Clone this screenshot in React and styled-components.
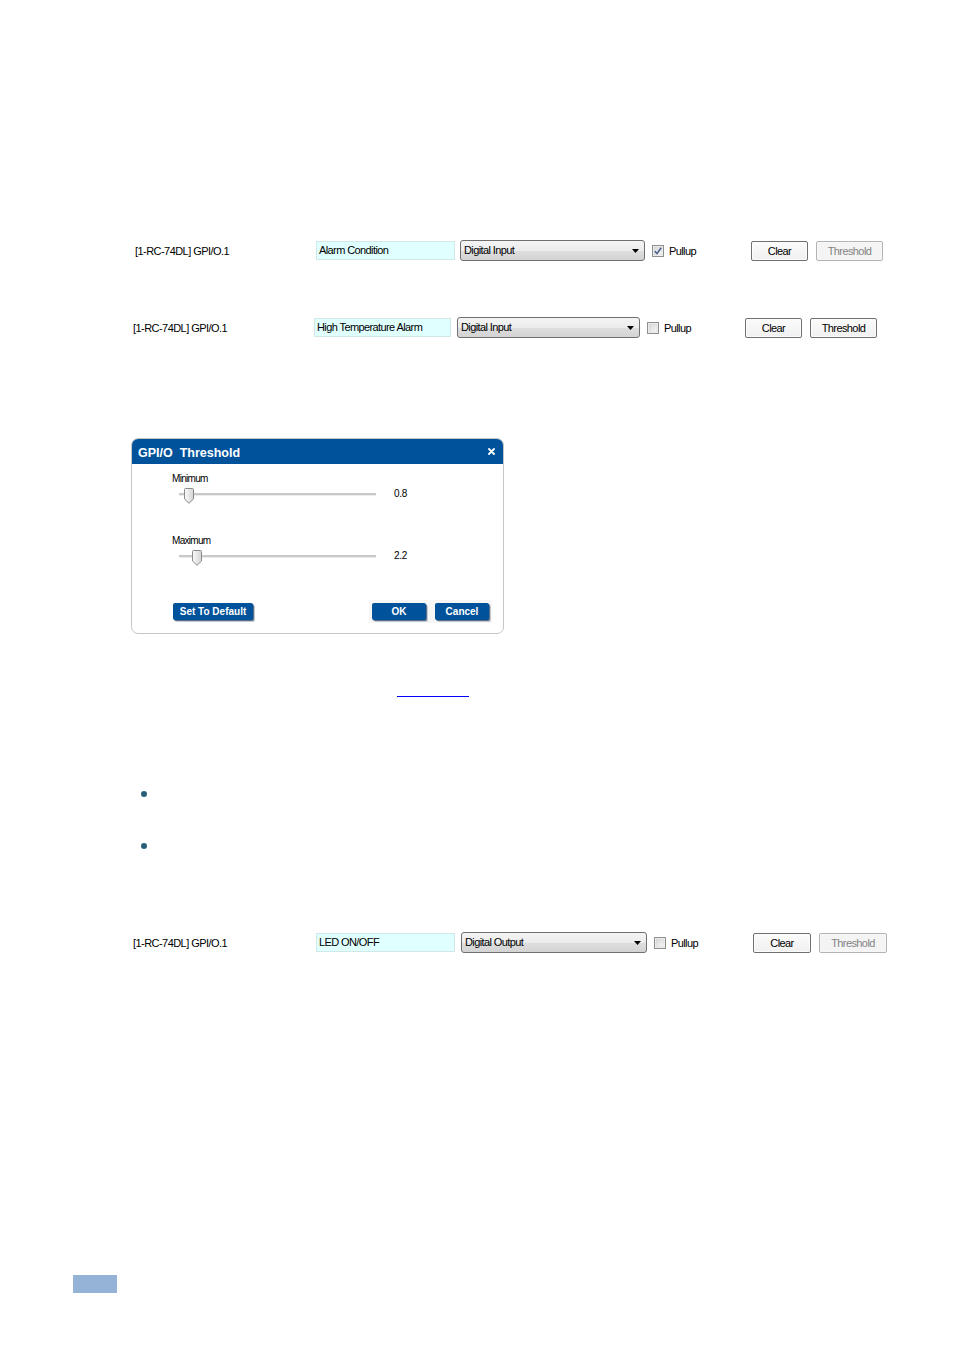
import React from "react";
import styled, { createGlobalStyle } from "styled-components";

const GlobalStyle = createGlobalStyle`
  html, body {
    margin: 0;
    padding: 0;
    background: #fff;
  }
  body {
    font-family: "Liberation Sans", Arial, sans-serif;
    color: #000;
  }
`;

const ports = [
  {
    mt: 240, left: 135, labelW: 181, textW: 139, selGap: 5, selW: 185,
    chkW: 99, clearW: 57, thrW: 67,
    name: "Alarm Condition", mode: "Digital Input", pullup: true, thresholdOn: false,
  },
  {
    mt: 56, left: 133, labelW: 181, textW: 137, selGap: 6, selW: 183,
    chkW: 98, clearW: 57, thrW: 67,
    name: "High Temperature Alarm", mode: "Digital Input", pullup: false, thresholdOn: true,
  },
];

const outputPort = {
  mt: 83, left: 133, labelW: 183, textW: 139, selGap: 6, selW: 186,
  chkW: 99, clearW: 58, thrW: 68,
  name: "LED ON/OFF", mode: "Digital Output", pullup: false, thresholdOn: false,
};

function Arrow() {
  return (
    <svg width="7" height="4" viewBox="0 0 7 4">
      <path d="M0 0 H7 L3.5 4 Z" fill="#000" />
    </svg>
  );
}

function CheckBox({ checked }) {
  return (
    <svg width="12" height="12" viewBox="0 0 12 12">
      <defs>
        <linearGradient id="cbg" x1="0" y1="0" x2="1" y2="1">
          <stop offset="0" stopColor="#d6d6d6" />
          <stop offset="1" stopColor="#f8f8f8" />
        </linearGradient>
      </defs>
      <rect x="0.5" y="0.5" width="11" height="11" fill="#f4f4f4" stroke="#8e8f8f" />
      <rect x="2" y="2" width="8" height="8" fill="url(#cbg)" stroke="#cfcfcf" strokeWidth="0.5" />
      {checked && (
        <path d="M2.8 6.2 L5 8.6 L9.2 2.8" fill="none" stroke="#4b5f8e" strokeWidth="1.6" />
      )}
    </svg>
  );
}

function CloseIcon() {
  return (
    <svg width="7" height="7" viewBox="0 0 7 7">
      <path d="M1 1 L6 6 M6 1 L1 6" stroke="#fff" strokeWidth="1.8" strokeLinecap="round" />
    </svg>
  );
}

function ThumbShape() {
  return (
    <svg width="10" height="16" viewBox="0 0 10 16">
      <defs>
        <linearGradient id="thg" x1="0" y1="0" x2="1" y2="0">
          <stop offset="0" stopColor="#fafafa" />
          <stop offset="1" stopColor="#d4d4d4" />
        </linearGradient>
      </defs>
      <path
        d="M1.5 0.5 H8.5 Q9.5 0.5 9.5 1.5 V11 L5 15.3 L0.5 11 V1.5 Q0.5 0.5 1.5 0.5 Z"
        fill="url(#thg)"
        stroke="#8a8a8a"
      />
    </svg>
  );
}

function PortRow({ p }) {
  return (
    <Row $mt={p.mt} $left={p.left}>
      <PortLabel $w={p.labelW}>[1-RC-74DL] GPI/O.1</PortLabel>
      <NameBox $w={p.textW}>{p.name}</NameBox>
      <Combo $gap={p.selGap} $w={p.selW}>
        <span>{p.mode}</span>
        <Arrow />
      </Combo>
      <CheckGroup $w={p.chkW}>
        <CheckBox checked={p.pullup} />
        <span>Pullup</span>
      </CheckGroup>
      <WinButton $w={p.clearW}>Clear</WinButton>
      <WinButton $w={p.thrW} $disabled={!p.thresholdOn} $gap={8}>
        Threshold
      </WinButton>
    </Row>
  );
}

function ThresholdSlider({ label, value, pos, mt }) {
  return (
    <SliderBlock $mt={mt}>
      <FieldLabel>{label}</FieldLabel>
      <SliderRow>
        <Track>
          <Thumb style={{ left: pos }}>
            <ThumbShape />
          </Thumb>
        </Track>
        <Value>{value}</Value>
      </SliderRow>
    </SliderBlock>
  );
}

export default function App() {
  return (
    <>
      <GlobalStyle />
      <Page>
        {ports.map((p, i) => (
          <PortRow key={i} p={p} />
        ))}

        <Dialog>
          <DialogHeader>
            <DialogTitle>GPI/O  Threshold</DialogTitle>
            <CloseIcon />
          </DialogHeader>
          <DialogBody>
            <ThresholdSlider label="Minimum" value="0.8" pos={5} mt={0} />
            <ThresholdSlider label="Maximum" value="2.2" pos={13} mt={32} />
            <ButtonBar>
              <BlueButton $w={80}>Set To Default</BlueButton>
              <ButtonGroup>
                <BlueButton $w={54}>OK</BlueButton>
                <BlueButton $w={54}>Cancel</BlueButton>
              </ButtonGroup>
            </ButtonBar>
          </DialogBody>
        </Dialog>

        <LinkLine />
        <Bullet $mt={94} />
        <Bullet $mt={46} />

        <PortRow p={outputPort} />

        <FooterTab />
      </Page>
    </>
  );
}

const Page = styled.div`
  width: 954px;
  min-height: 1350px;
  display: flex;
  flex-direction: column;
  align-items: flex-start;
`;

const Row = styled.div`
  display: flex;
  align-items: center;
  height: 21px;
  margin-top: ${(p) => p.$mt}px;
  padding-left: ${(p) => p.$left}px;
  font-size: 11px;
  letter-spacing: -0.6px;
`;

const PortLabel = styled.div`
  width: ${(p) => p.$w}px;
  flex-shrink: 0;
  letter-spacing: -0.55px;
`;

const NameBox = styled.div`
  width: ${(p) => p.$w}px;
  height: 19px;
  box-sizing: border-box;
  flex-shrink: 0;
  background: #e0ffff;
  border: 1px solid #d2e8e8;
  padding-left: 2px;
  line-height: 16px;
  white-space: nowrap;
  overflow: hidden;
`;

const Combo = styled.div`
  width: ${(p) => p.$w}px;
  margin-left: ${(p) => p.$gap}px;
  height: 21px;
  box-sizing: border-box;
  flex-shrink: 0;
  border: 1px solid #707070;
  border-radius: 3px;
  background: linear-gradient(#f4f4f4 0%, #ececec 50%, #dedede 52%, #d3d3d3 100%);
  display: flex;
  align-items: center;
  justify-content: space-between;
  padding: 0 5px 0 3px;
  line-height: 19px;
`;

const CheckGroup = styled.div`
  width: ${(p) => p.$w}px;
  margin-left: 7px;
  flex-shrink: 0;
  display: flex;
  align-items: center;
  gap: 5px;
  svg {
    display: block;
  }
`;

const WinButton = styled.div`
  width: ${(p) => p.$w}px;
  margin-left: ${(p) => p.$gap || 0}px;
  height: 20px;
  box-sizing: border-box;
  flex-shrink: 0;
  border: 1px solid ${(p) => (p.$disabled ? "#b0b4b7" : "#707070")};
  border-radius: 2px;
  box-shadow: inset 0 0 0 1px ${(p) => (p.$disabled ? "#f7f7f7" : "#fcfcfc")};
  background: ${(p) => (p.$disabled ? "#f4f4f4" : "linear-gradient(#fbfbfb, #f0f0f0)")};
  color: ${(p) => (p.$disabled ? "#838383" : "#000")};
  display: flex;
  align-items: center;
  justify-content: center;
`;

const Dialog = styled.div`
  margin-top: 100px;
  margin-left: 131px;
  width: 373px;
  height: 196px;
  box-sizing: border-box;
  border: 1px solid #c6c6c6;
  border-radius: 7px;
  overflow: hidden;
  background: #fff;
  display: flex;
  flex-direction: column;
`;

const DialogHeader = styled.div`
  height: 25px;
  flex-shrink: 0;
  background: #00529b;
  display: flex;
  align-items: center;
  justify-content: space-between;
  padding: 0 8px 0 6px;
  svg {
    display: block;
  }
`;

const DialogTitle = styled.div`
  color: #fff;
  font-weight: bold;
  font-size: 12.5px;
  white-space: pre;
  padding-top: 2px;
`;

const DialogBody = styled.div`
  display: flex;
  flex-direction: column;
  padding: 9px 0 0 40px;
`;

const SliderBlock = styled.div`
  margin-top: ${(p) => p.$mt}px;
  display: flex;
  flex-direction: column;
`;

const FieldLabel = styled.div`
  font-size: 10px;
  line-height: 12px;
  height: 12px;
  letter-spacing: -0.7px;
`;

const SliderRow = styled.div`
  margin-top: 2px;
  height: 16px;
  display: flex;
  align-items: flex-start;
  padding-left: 7px;
`;

const Track = styled.div`
  position: relative;
  width: 197px;
  height: 2px;
  margin-top: 6px;
  background: #c9c9c9;
  border-bottom: 1px solid #ececec;
`;

const Thumb = styled.div`
  position: absolute;
  top: -5px;
  svg {
    display: block;
  }
`;

const Value = styled.div`
  margin-left: 18px;
  margin-top: 1px;
  font-size: 10px;
  line-height: 12px;
  letter-spacing: -0.3px;
`;

const ButtonBar = styled.div`
  margin-top: 35px;
  display: flex;
  align-items: center;
  padding-left: 1px;
`;

const ButtonGroup = styled.div`
  display: flex;
  gap: 9px;
  padding: 3px;
  margin-left: 116px;
  background: #f6f6f6;
`;

const BlueButton = styled.div`
  width: ${(p) => p.$w}px;
  height: 17px;
  box-sizing: border-box;
  background: #00529b;
  border-radius: 2px;
  box-shadow: 1px 1px 0 #5c6d87, 2px 2px 0 #c6ccd4;
  color: #fff;
  font-weight: bold;
  font-size: 10px;
  display: flex;
  align-items: center;
  justify-content: center;
`;

const LinkLine = styled.div`
  margin-top: 62px;
  margin-left: 397px;
  width: 72px;
  height: 1px;
  background: #0000ff;
`;

const Bullet = styled.div`
  margin-top: ${(p) => p.$mt}px;
  margin-left: 141px;
  width: 6px;
  height: 6px;
  border-radius: 50%;
  background: #2a5f78;
`;

const FooterTab = styled.div`
  margin-top: 322px;
  margin-left: 73px;
  width: 44px;
  height: 18px;
  background: #95b3d7;
`;
